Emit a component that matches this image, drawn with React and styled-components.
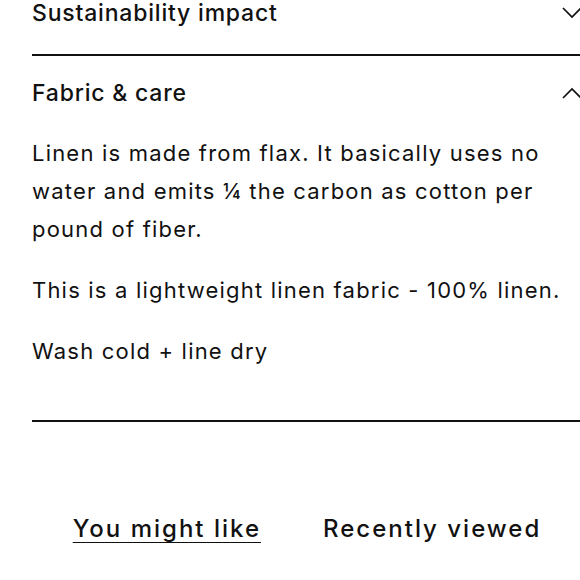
import styled, { createGlobalStyle } from 'styled-components';

const GlobalStyle = createGlobalStyle`
  html, body {
    margin: 0;
    padding: 0;
    background: #ffffff;
    overflow: hidden;
  }

  body {
    font-family: Inter, 'Noto Sans', sans-serif;
    color: #111111;
    -webkit-font-smoothing: antialiased;
  }
`;

const Chevron = ({ up }) => (
  <svg width="20" height="12" viewBox="0 0 20 12" fill="none">
    <polyline
      points={up ? '1,11 10,2 19,11' : '1,1 10,10 19,1'}
      stroke="#111111"
      strokeWidth="1.7"
    />
  </svg>
);

const App = () => {
  return (
    <>
      <GlobalStyle />
      <StPage>
        <StAccordion>
          <StItem>
            <StItemHeader>
              <StItemTitle>Sustainability impact</StItemTitle>
              <Chevron />
            </StItemHeader>
          </StItem>
          <StItem>
            <StItemHeader>
              <StItemTitle>Fabric &amp; care</StItemTitle>
              <Chevron up />
            </StItemHeader>
            <StItemBody>
              <StParagraph>
                Linen is made from flax. It basically uses no water and emits ¼ the carbon as
                cotton per pound of fiber.
              </StParagraph>
              <StParagraph>This is a lightweight linen fabric - 100% linen.</StParagraph>
              <StParagraph>Wash cold + line dry</StParagraph>
            </StItemBody>
          </StItem>
        </StAccordion>
        <StTabs>
          <StTab $active>You might like</StTab>
          <StTab>Recently viewed</StTab>
        </StTabs>
      </StPage>
    </>
  );
};

const StPage = styled.div`
  width: 550px;
  margin-top: -24px;
  padding-left: 32px;
`;

const StAccordion = styled.div`
  display: flex;
  flex-direction: column;
`;

const StItem = styled.section`
  border-bottom: 2px solid #111111;
`;

const StItemHeader = styled.div`
  display: flex;
  justify-content: space-between;
  align-items: center;
  padding: 23px 0 27px;
`;

const StItemTitle = styled.h3`
  margin: 0;
  font-size: 23px;
  line-height: 28px;
  font-weight: 500;
  letter-spacing: 0.8px;
`;

const StItemBody = styled.div`
  display: flex;
  flex-direction: column;
  gap: 23px;
  padding-bottom: 50px;
`;

const StParagraph = styled.p`
  margin: 0;
  font-size: 22px;
  line-height: 38px;
  font-weight: 400;
  letter-spacing: 1.2px;
`;

const StTabs = styled.div`
  display: flex;
  justify-content: center;
  gap: 62px;
  margin-top: 93px;
`;

const StTab = styled.button`
  border: none;
  background: none;
  padding: 0;
  font-family: inherit;
  color: #111111;
  font-size: 24px;
  line-height: 28px;
  font-weight: 500;
  letter-spacing: 2px;
  text-decoration: ${({ $active }) => ($active ? 'underline' : 'none')};
  text-decoration-thickness: 2px;
  text-underline-offset: 5px;
  cursor: pointer;
`;

export default App;
